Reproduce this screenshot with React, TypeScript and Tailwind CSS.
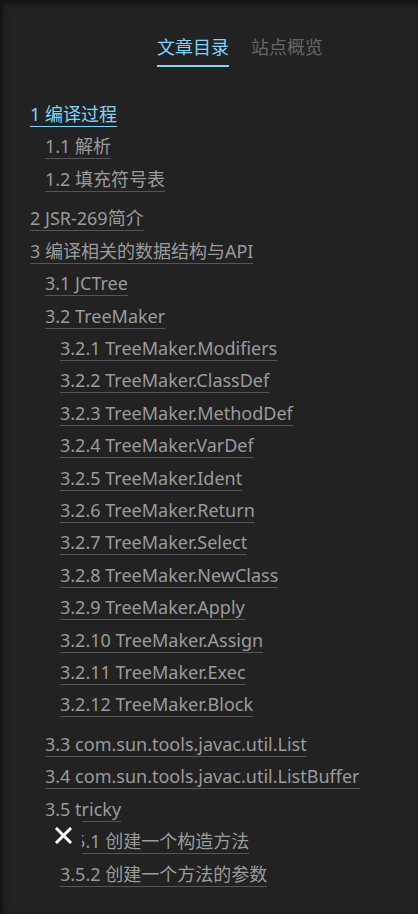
import React from 'react';

interface TocItem {
  label: string;
  children?: TocItem[];
}

const toc: TocItem[] = [
  {
    label: '1 编译过程',
    children: [{ label: '1.1 解析' }, { label: '1.2 填充符号表' }],
  },
  { label: '2 JSR-269简介' },
  {
    label: '3 编译相关的数据结构与API',
    children: [
      { label: '3.1 JCTree' },
      {
        label: '3.2 TreeMaker',
        children: [
          { label: '3.2.1 TreeMaker.Modifiers' },
          { label: '3.2.2 TreeMaker.ClassDef' },
          { label: '3.2.3 TreeMaker.MethodDef' },
          { label: '3.2.4 TreeMaker.VarDef' },
          { label: '3.2.5 TreeMaker.Ident' },
          { label: '3.2.6 TreeMaker.Return' },
          { label: '3.2.7 TreeMaker.Select' },
          { label: '3.2.8 TreeMaker.NewClass' },
          { label: '3.2.9 TreeMaker.Apply' },
          { label: '3.2.10 TreeMaker.Assign' },
          { label: '3.2.11 TreeMaker.Exec' },
          { label: '3.2.12 TreeMaker.Block' },
        ],
      },
      { label: '3.3 com.sun.tools.javac.util.List' },
      { label: '3.4 com.sun.tools.javac.util.ListBuffer' },
      {
        label: '3.5 tricky',
        children: [{ label: '3.5.1 创建一个构造方法' }, { label: '3.5.2 创建一个方法的参数' }],
      },
    ],
  },
];

const ACTIVE = '1 编译过程';

const TocList: React.FC<{ items: TocItem[]; nested?: boolean }> = ({ items, nested }) => (
  <ol className={nested ? 'pl-[15px] mb-[7.3px]' : 'pl-[30px]'}>
    {items.map(item => {
      const active = item.label === ACTIVE;
      return (
        <li key={item.label}>
          <div className="flex pt-[7.4px]">
            <a
              href="#"
              className={`block leading-[24px] border-b whitespace-nowrap ${
                active ? 'text-[#7fd5fb] border-[#7fd5fb]' : 'text-[#9b9b9b] border-[#555555]'
              }`}
            >
              {item.label}
            </a>
          </div>
          {item.children && <TocList items={item.children} nested />}
        </li>
      );
    })}
  </ol>
);

export default function App() {
  return (
    <div
      className="relative h-[914px] overflow-hidden bg-[#222222] text-[18px] shadow-[inset_2px_3px_6px_rgba(0,0,0,0.55)]"
      style={{ fontFamily: '"Noto Sans", "Noto Sans CJK SC", sans-serif' }}
    >
      <div className="flex pl-[157px] pt-[35px] gap-[22px]">
        <div className="leading-[24px] pb-[6px] border-b-2 border-[#7fd5fb] text-[#7fd5fb]">文章目录</div>
        <div className="leading-[24px] pb-[6px] text-[#666666]">站点概览</div>
      </div>

      <div className="mt-[27.6px]">
        <TocList items={toc} />
      </div>

      <button className="absolute left-[45px] top-[817px] w-[37px] h-[37px] flex items-center justify-center bg-[#222222]">
        <svg width="17" height="17" viewBox="0 0 17 17" fill="none">
          <path d="M2 2L15 15M15 2L2 15" stroke="#ffffff" strokeWidth="3" strokeLinecap="square" />
        </svg>
      </button>
    </div>
  );
}
